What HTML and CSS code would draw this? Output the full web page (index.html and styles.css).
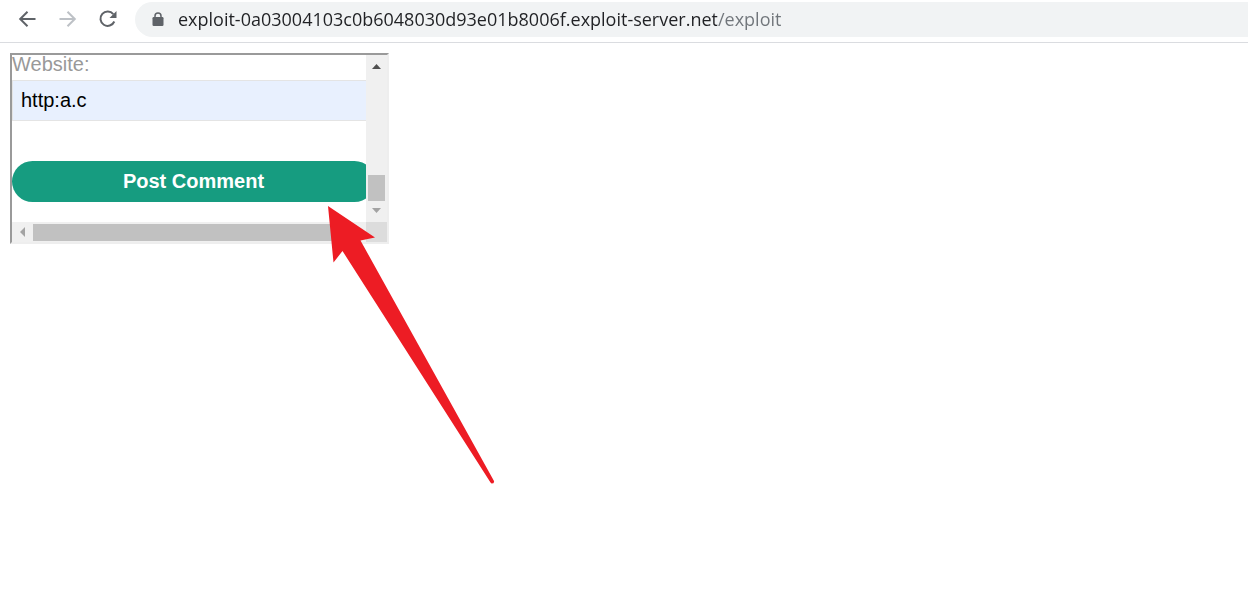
FILE: index.html
```
<!DOCTYPE html>
<html lang="en">
<head>
<meta charset="utf-8">
<title>Exploit</title>
<link rel="stylesheet" href="styles.css">
</head>
<body>
<header class="toolbar">
  <nav class="nav">
    <button class="nav-button" type="button" aria-label="Back">
      <svg width="20" height="20" viewBox="0 0 20 20"><path d="M17.500 10H3M9.500 2.700L2.200 10l7.300 7.300" fill="none" stroke="#5f6368" stroke-width="2"/></svg>
    </button>
    <button class="nav-button" type="button" aria-label="Forward" disabled>
      <svg width="20" height="20" viewBox="0 0 20 20"><path d="M1.500 10H16M9.500 2.700l7.300 7.300-7.300 7.300" fill="none" stroke="#bdc1c6" stroke-width="2"/></svg>
    </button>
    <button class="nav-button" type="button" aria-label="Reload">
      <svg width="20" height="20" viewBox="0 0 20 20"><path d="M16.300 12.500A7.200 7.200 0 1 1 15.300 5.200" fill="none" stroke="#5f6368" stroke-width="2"/><path d="M18.500 2v7h-7z" fill="#5f6368"/></svg>
    </button>
  </nav>
  <div class="address">
    <svg class="lock" width="12" height="15" viewBox="0 0 12 15"><path d="M3 6V4a3 3 0 0 1 6 0v2" fill="none" stroke="#5f6368" stroke-width="1.500"/><rect x="0.500" y="5" width="11" height="9" rx="1.200" fill="#5f6368"/></svg>
    <input class="url" type="text" aria-label="Address" value="exploit-0a03004103c0b6048030d93e01b8006f.exploit-server.net/exploit">
  </div>
</header>
<main class="page">
  <section class="frame">
    <form class="comment">
      <label class="label" for="website">Website:</label>
      <input class="field" id="website" type="text" value="http:a.c">
      <button class="post" type="button">Post Comment</button>
    </form>
    <div class="vbar">
      <svg width="11" height="5" viewBox="0 0 11 5"><path d="M1 5l4.500-5L10 5z" fill="#505050"/></svg>
      <div class="vthumb"></div>
      <svg width="11" height="5" viewBox="0 0 11 5"><path d="M1 0h9L5.500 5z" fill="#a3a3a3"/></svg>
    </div>
    <div class="hbar">
      <svg width="5" height="10" viewBox="0 0 5 10"><path d="M5 0v10L0 5z" fill="#a3a3a3"/></svg>
      <div class="hthumb"></div>
    </div>
    <div class="corner"></div>
  </section>
  <svg class="pointer" width="168" height="280" viewBox="327 205 168 280"><path d="M328 206L375 237.500 360.500 240.500 494 481Q494.500 483.500 491.500 483.500L490.500 482.500 342.500 251 333.500 262.500z" fill="#ed1c24"/></svg>
</main>
</body>
</html>
```
FILE: styles.css
```
* { box-sizing: border-box; }

body {
  display: flex;
  flex-direction: column;
  min-height: 100vh;
  margin: 0;
  background: #fff;
  font-family: "Liberation Sans", Arial, sans-serif;
  font-size: 20px;
}

button { border: 0; padding: 0; background: none; }
svg { display: block; }

.toolbar {
  display: flex;
  gap: 17px;
  padding: 2px 0 5px 18px;
  border-bottom: 1px solid #dadce0;
}

.nav { display: flex; align-items: center; gap: 20px; height: 34px; }

.address {
  flex: 1;
  display: flex;
  align-items: center;
  gap: 14px;
  height: 35px;
  padding-left: 17px;
  border-radius: 18px 0 0 18px;
  background: #f1f3f4;
}

.url {
  flex: 1;
  min-width: 0;
  border: 0;
  padding: 0 0 2px;
  outline: 0;
  font: 18px/24px "Open Sans", "Noto Sans", sans-serif;
  color: #202124;
  background: linear-gradient(90deg, #202124 539px, #70757a 539px);
  background-clip: text;
  -webkit-background-clip: text;
  -webkit-text-fill-color: transparent;
}

.page { position: relative; flex: 1; padding: 10px; }

.frame {
  display: grid;
  grid-template-columns: 354px 21px;
  grid-template-rows: auto 20px;
  width: max-content;
  border: 2px solid;
  border-color: #9a9a9a #eee #eee #9a9a9a;
}

.comment {
  display: flex;
  flex-direction: column;
  min-width: 0;
  overflow-x: clip;
  padding-bottom: 20px;
}

.label { height: 25px; line-height: 18px; color: #999; }

.field {
  width: 364px;
  height: 41px;
  padding: 0 8px;
  border: 1px solid #e4e4e4;
  font: inherit;
  color: #000;
  background: #e8f0fe;
}

.post {
  width: 363px;
  height: 41px;
  margin-top: 40px;
  border-radius: 21px;
  background: #169c80;
  color: #fff;
  font: bold 20px "Liberation Sans", Arial, sans-serif;
}

.vbar {
  display: flex;
  flex-direction: column;
  align-items: center;
  padding: 9px 0;
  background: #f0f0f0;
}

.vthumb { width: 17px; height: 26px; margin: auto 0 7px; background: #c1c1c1; }

.hbar {
  display: flex;
  align-items: center;
  gap: 8px;
  padding: 0 21px 0 8px;
  background: #f0f0f0;
}

.hthumb { flex: 1; height: 17px; background: #c1c1c1; }
.corner { background: #dcdcdc; }
.pointer { position: absolute; left: 327px; top: 162px; }
```
